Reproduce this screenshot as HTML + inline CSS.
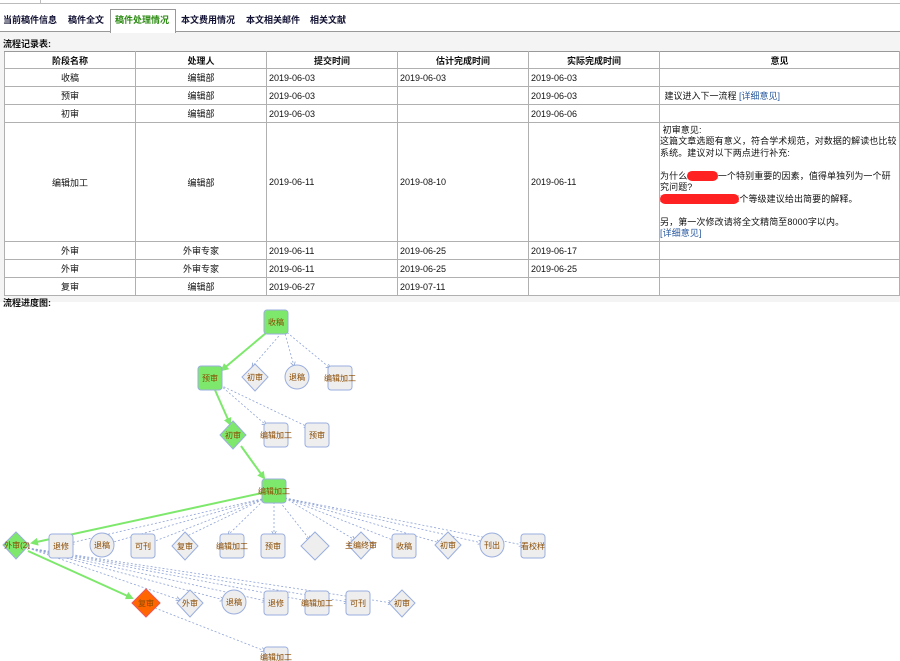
<!DOCTYPE html>
<html><head><meta charset="utf-8"><style>
body{margin:0;width:900px;height:661px;overflow:hidden;background:#fff;font-family:"Liberation Sans","Noto Sans CJK SC",sans-serif;font-size:9px;color:#111;position:relative}
.abs{position:absolute}
.tabs span{position:absolute;top:13px;font-weight:bold;font-size:9px;color:#113}
table{border-collapse:collapse;position:absolute;left:4px;top:51px;width:896px;background:#fff;table-layout:fixed}
td,th{border:1px solid #b0b0b0;border-top:1px solid #999;padding:0 2px;font-size:9px;height:17px;font-weight:normal}
th{font-weight:bold;height:16px}
td.c{text-align:center}
a{color:#2a5aa0;text-decoration:none}
</style></head><body>
<div class="abs" style="left:0;top:0;width:900px;height:3px;border-bottom:1px solid #bbb"></div>
<div class="abs" style="left:40px;top:0;width:1px;height:3px;background:#bbb"></div>
<div class="abs" style="left:0;top:31px;width:900px;height:270px;background:#f4f4f4;border-top:1px solid #999"></div>
<div class="abs" style="left:110px;top:9px;width:64px;height:23px;background:#fff;border:1px solid #999;border-bottom:none"></div>
<div class="tabs">
<span style="left:3px">当前稿件信息</span>
<span style="left:68px">稿件全文</span>
<span style="left:115px;color:#2a8a10">稿件处理情况</span>
<span style="left:181px">本文费用情况</span>
<span style="left:246px">本文相关邮件</span>
<span style="left:310px">相关文献</span>
</div>
<div class="abs" style="left:3px;top:37px;font-weight:bold">流程记录表:</div>
<table>
<colgroup><col style="width:131px"><col style="width:131px"><col style="width:131px"><col style="width:131px"><col style="width:131px"><col></colgroup>
<tr><th>阶段名称</th><th>处理人</th><th>提交时间</th><th>估计完成时间</th><th>实际完成时间</th><th>意见</th></tr>
<tr><td class="c">收稿</td><td class="c">编辑部</td><td>2019-06-03</td><td>2019-06-03</td><td>2019-06-03</td><td></td></tr>
<tr><td class="c">预审</td><td class="c">编辑部</td><td>2019-06-03</td><td></td><td>2019-06-03</td><td>&nbsp;建议进入下一流程 <a>[详细意见]</a></td></tr>
<tr><td class="c">初审</td><td class="c">编辑部</td><td>2019-06-03</td><td></td><td>2019-06-06</td><td></td></tr>
<tr><td class="c" style="height:118px">编辑加工</td><td class="c">编辑部</td><td>2019-06-11</td><td>2019-08-10</td><td>2019-06-11</td><td style="padding:0 0 0 0;line-height:11.5px;letter-spacing:0.1px">&nbsp;初审意见:<br>这篇文章选题有意义，符合学术规范，对数据的解读也比较系统。建议对以下两点进行补充:<br><br>为什么<span style="background:#f22;color:#f22;border-radius:6px">XXXXX</span>一个特别重要的因素，值得单独列为一个研究问题?<br><span style="background:#f22;color:#f22;border-radius:6px">XXXXXXXXXXXXX</span>个等级建议给出简要的解释。<br><br>另，第一次修改请将全文精简至8000字以内。<br><a>[详细意见]</a></td></tr>
<tr><td class="c">外审</td><td class="c">外审专家</td><td>2019-06-11</td><td>2019-06-25</td><td>2019-06-17</td><td></td></tr>
<tr><td class="c">外审</td><td class="c">外审专家</td><td>2019-06-11</td><td>2019-06-25</td><td>2019-06-25</td><td></td></tr>
<tr><td class="c">复审</td><td class="c">编辑部</td><td>2019-06-27</td><td>2019-07-11</td><td></td><td></td></tr>
</table>
<div class="abs" style="left:3px;top:296px;font-weight:bold">流程进度图:</div>
<div class="abs" style="left:0;top:309px;width:900px;height:352px;background:#fff"></div>
<svg class="abs" style="left:0;top:0" width="900" height="661" font-family="Liberation Sans,Noto Sans CJK SC,sans-serif" font-size="8">
<defs>
<marker id="a" markerWidth="6" markerHeight="6" refX="5" refY="3" orient="auto"><path d="M0,0L5,3L0,6" fill="none" stroke="#8aa0d0"/></marker>
<marker id="g" markerWidth="4" markerHeight="4" refX="3" refY="2" orient="auto"><path d="M0,0L4,2L0,4z" fill="#7de86b"/></marker>
</defs>
<g stroke="#8fa3d6" stroke-dasharray="2,2" stroke-width="0.8" fill="none" marker-end="url(#a)">
<path d="M284,330L252,367"/><path d="M284,330L294,366"/><path d="M284,330L330,368"/>
<path d="M220,385L266,425"/><path d="M220,385L308,427"/>
<path d="M266,498L70,543"/><path d="M266,498L110,543"/><path d="M266,498L150,543"/><path d="M266,498L185,537"/><path d="M266,498L228,535"/><path d="M274,502L274,535"/><path d="M280,502L310,540"/><path d="M285,498L355,540"/><path d="M285,498L398,542"/><path d="M285,498L440,543"/><path d="M285,498L482,543"/><path d="M285,498L523,545"/>
<path d="M28,548L180,600"/><path d="M28,548L224,600"/><path d="M28,548L266,601"/><path d="M28,548L308,601"/><path d="M28,548L348,602"/><path d="M28,548L392,603"/>
<path d="M155,608L265,651"/>
</g>
<g stroke="#7de86b" stroke-width="2" fill="none" marker-end="url(#g)">
<path d="M266,333L222,370"/><path d="M215,390L230,424"/><path d="M241,446L264,478"/><path d="M262,493L32,543"/><path d="M28,551L132,598"/>
</g>
<g stroke="#9aaede" stroke-width="1">
<rect x="264" y="310" width="24" height="24" rx="3" fill="#7de86b"/>
<rect x="198" y="366" width="24" height="24" rx="3" fill="#7de86b"/>
<path d="M255,364L268,377L255,391L242,377z" fill="#eee"/>
<circle cx="297" cy="377" r="12" fill="#eee"/>
<rect x="328" y="366" width="24" height="24" rx="3" fill="#eee"/>
<path d="M233,421L246,435L233,449L220,435z" fill="#7de86b"/>
<rect x="264" y="423" width="24" height="24" rx="3" fill="#eee"/>
<rect x="305" y="423" width="24" height="24" rx="3" fill="#eee"/>
<rect x="262" y="479" width="24" height="24" rx="3" fill="#7de86b"/>
<path d="M16,532L29,545L16,559L3,545z" fill="#7de86b"/>
<rect x="49" y="534" width="24" height="24" rx="3" fill="#eee"/>
<circle cx="102" cy="545" r="12" fill="#eee"/>
<rect x="131" y="534" width="24" height="24" rx="3" fill="#eee"/>
<path d="M185,532L198,546L185,560L172,546z" fill="#eee"/>
<rect x="220" y="534" width="24" height="24" rx="3" fill="#eee"/>
<rect x="261" y="534" width="24" height="24" rx="3" fill="#eee"/>
<path d="M315,532L329,546L315,560L301,546z" fill="#eee"/>
<path d="M361,532L374,545L361,559L348,545z" fill="#eee"/>
<rect x="392" y="534" width="24" height="24" rx="3" fill="#eee"/>
<path d="M448,532L461,545L448,559L435,545z" fill="#eee"/>
<circle cx="492" cy="545" r="12" fill="#eee"/>
<rect x="521" y="534" width="24" height="24" rx="3" fill="#eee"/>
<path d="M146,589L160,603L146,617L132,603z" fill="#f60" stroke="#e55"/>
<path d="M190,590L203,603L190,617L177,603z" fill="#eee"/>
<circle cx="234" cy="602" r="12" fill="#eee"/>
<rect x="264" y="591" width="24" height="24" rx="3" fill="#eee"/>
<rect x="305" y="591" width="24" height="24" rx="3" fill="#eee"/>
<rect x="346" y="591" width="24" height="24" rx="3" fill="#eee"/>
<path d="M402,590L415,603L402,617L389,603z" fill="#eee"/>
<rect x="264" y="647" width="24" height="24" rx="3" fill="#eee"/>
</g>
<g fill="#8a4a00" text-anchor="middle">
<text x="276" y="325">收稿</text><text x="210" y="381">预审</text><text x="255" y="380">初审</text><text x="297" y="380">退稿</text><text x="340" y="381">编辑加工</text>
<text x="233" y="438">初审</text><text x="276" y="438">编辑加工</text><text x="317" y="438">预审</text>
<text x="274" y="494">编辑加工</text>
<text x="17" y="548">外审(2)</text><text x="61" y="549">退修</text><text x="102" y="548">退稿</text><text x="143" y="549">可刊</text><text x="185" y="549">复审</text><text x="232" y="549">编辑加工</text><text x="273" y="549">预审</text><text x="361" y="548">主编终审</text><text x="404" y="549">收稿</text><text x="448" y="548">初审</text><text x="492" y="548">刊出</text><text x="533" y="549">看校样</text>
<text x="146" y="606">复审</text><text x="190" y="606">外审</text><text x="234" y="605">退稿</text><text x="276" y="606">退修</text><text x="317" y="606">编辑加工</text><text x="358" y="606">可刊</text><text x="402" y="606">初审</text>
<text x="276" y="660">编辑加工</text>
</g>
</svg>
</body></html>
